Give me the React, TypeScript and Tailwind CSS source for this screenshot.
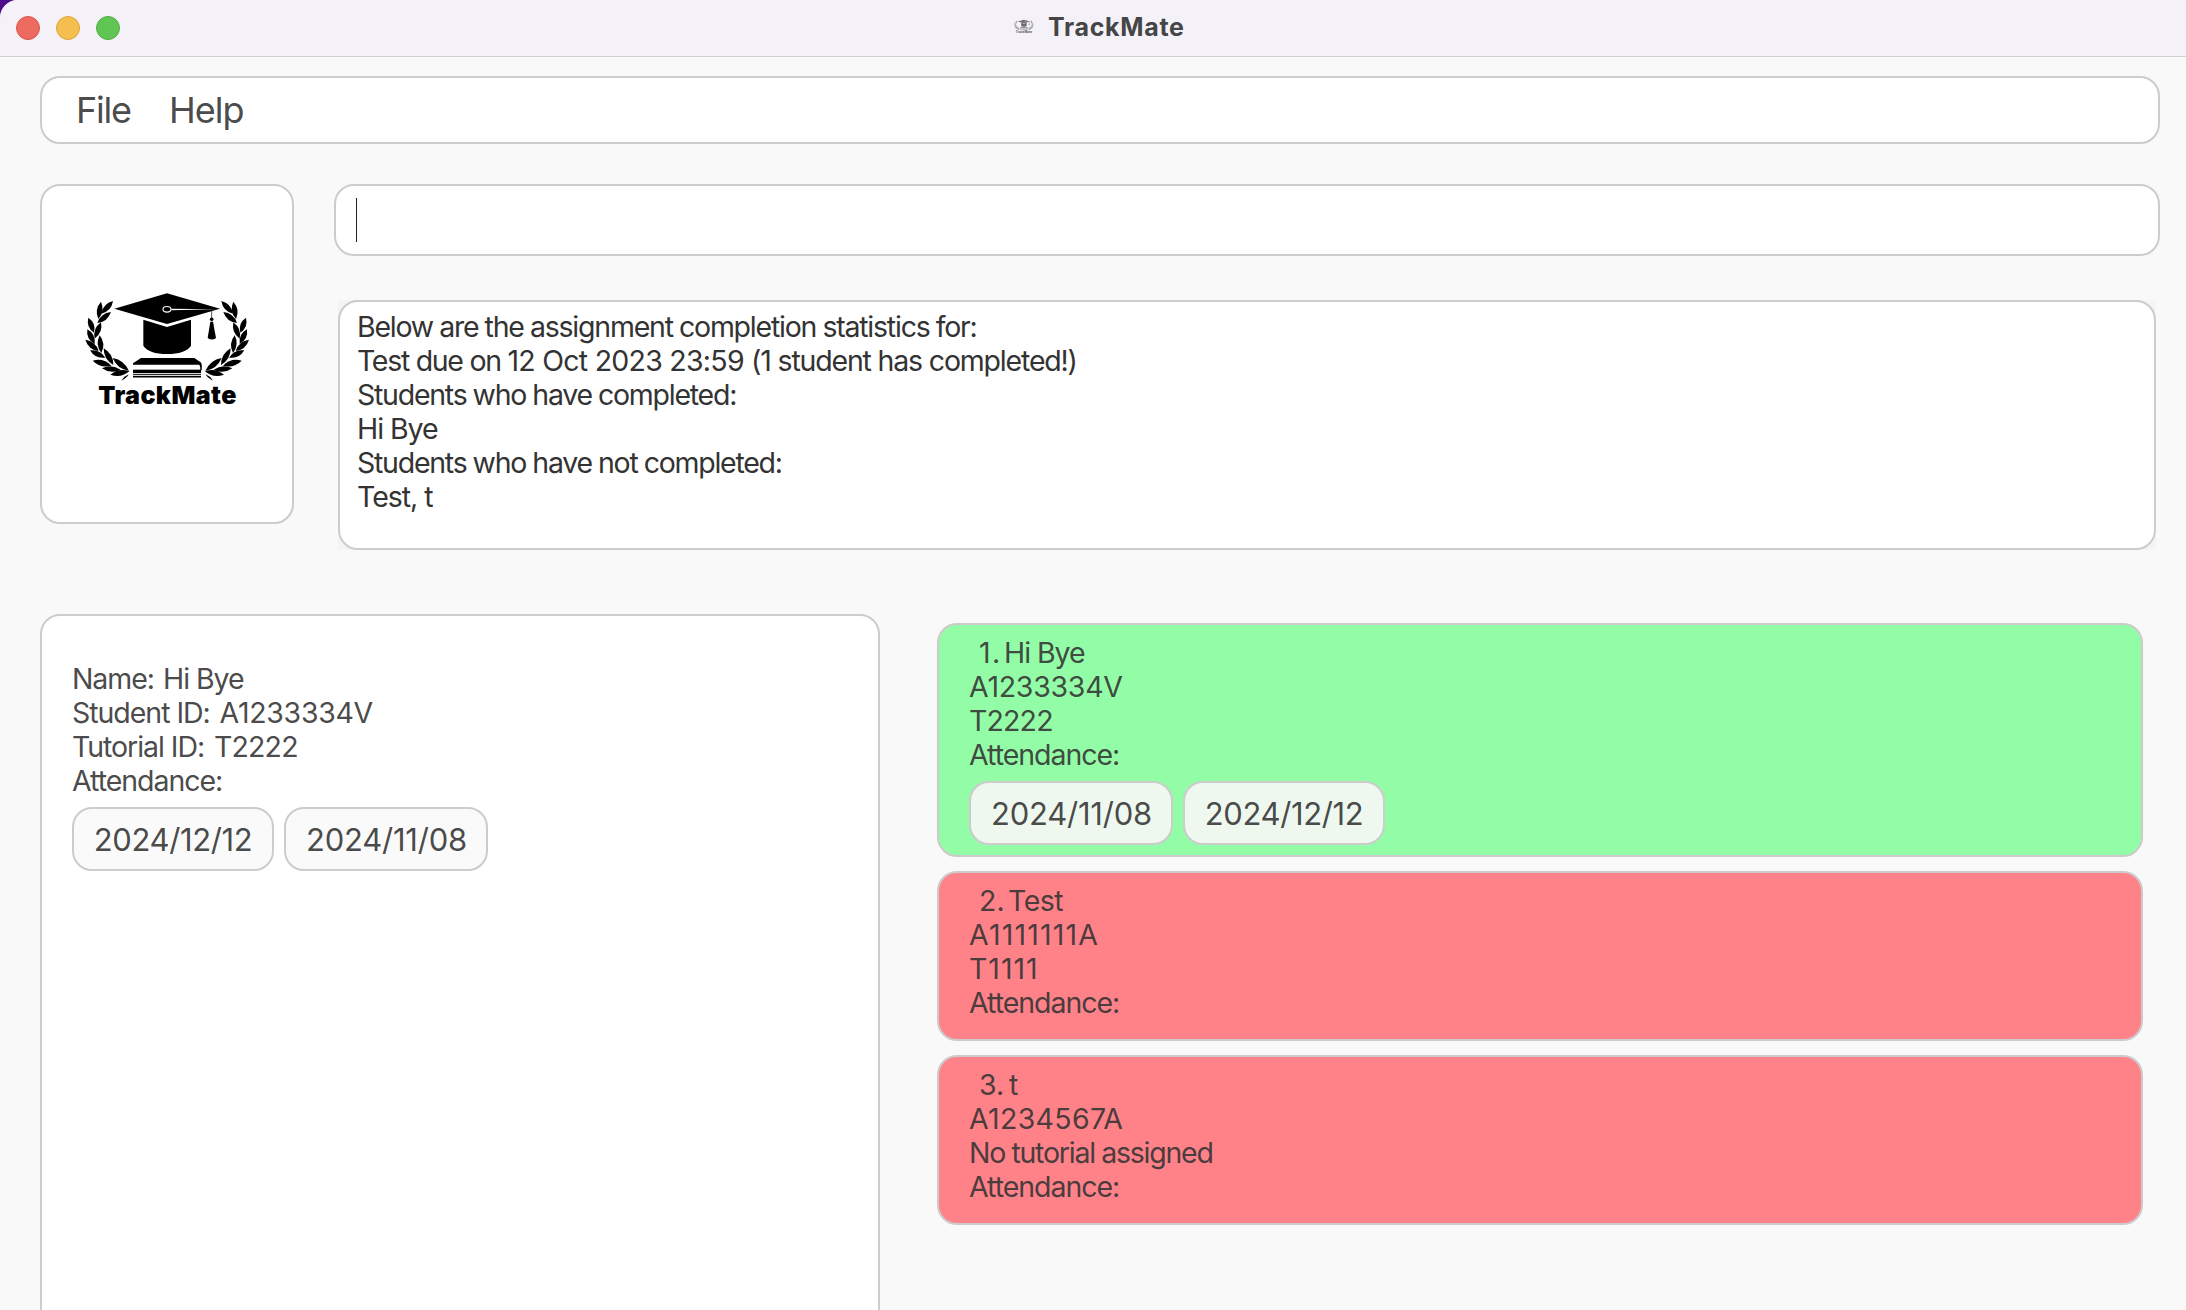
import React from "react";

type Leaf = [number, number, number, number];

const leaves: Leaf[] = [
  [249, 120, 214, 158],
  [213, 122, 205, 174],
  [243, 153, 202, 186],
  [175, 170, 192, 215],
  [213, 184, 194, 233],
  [172, 205, 194, 249],
  [209, 223, 214, 276],
  [166, 236, 206, 270],
  [180, 268, 226, 290],
  [221, 262, 250, 312],
  [188, 299, 244, 314],
  [248, 291, 297, 330],
  [216, 322, 272, 326],
  [241, 341, 298, 331],
];

const leafPath = ([x1, y1, x2, y2]: Leaf) => {
  const mx = (x1 + x2) / 2;
  const my = (y1 + y2) / 2;
  const len = Math.hypot(x2 - x1, y2 - y1);
  const nx = (-(y2 - y1) / len) * 17;
  const ny = ((x2 - x1) / len) * 17;
  return `M${x1} ${y1}Q${mx + nx} ${my + ny} ${x2} ${y2}Q${mx - nx} ${my - ny} ${x1} ${y1}Z`;
};

function Branch() {
  return (
    <g>
      {leaves.map((leaf, i) => (
        <path key={i} d={leafPath(leaf)} />
      ))}
      <path d="M274 359Q283 345 296 340Q290 352 274 359Z" />
    </g>
  );
}

function Logo({ className }: { className: string }) {
  return (
    <svg viewBox="159 90 510 360" className={`overflow-visible ${className}`} fill="currentColor">
      <Branch />
      <g transform="translate(823 0) scale(-1 1)">
        <Branch />
      </g>
      <path d="M411 97L570 143L411 189L253 143Z" />
      <path d="M340 176L411 198L483 176V254Q466 279 411 279Q357 279 340 254Z" />
      <ellipse cx="411" cy="145" rx="12" ry="8.5" fill="black" stroke="white" strokeWidth="3.5" />
      <path d="M424 143.5L560 144.5L424 147.5Z" fill="white" />
      <path d="M545 150V172" stroke="currentColor" strokeWidth="2" />
      <circle cx="545" cy="175" r="5.5" />
      <path d="M541 182H549L558 231Q546 240 533 231Z" />
      <path d="M333 291H493L512 304Q517 308 515 328L511 329Q512 316 508 311H309V307Z" />
      <rect x="309" y="326" width="204" height="10.5" />
      <rect x="309" y="339" width="204" height="2.5" />
      <rect x="309" y="344.5" width="204" height="5" />
      <text x="205" y="430" className="font-['Inter',sans-serif] text-[75px] font-black tracking-[1.2px]">
        TrackMate
      </text>
    </svg>
  );
}

function Pill({ date, className }: { date: string; className: string }) {
  return (
    <div
      className={`flex h-16 items-center justify-center rounded-[20px] border-2 border-[#cccccc] text-[31px] leading-[37px] ${className}`}
    >
      {date}
    </div>
  );
}

type Student = {
  index: string;
  indexClass: string;
  name: string;
  nameClass: string;
  id: string;
  idClass: string;
  tutorial: string;
  tutorialClass: string;
  cardClass: string;
  dates: { date: string; className: string }[];
};

const students: Student[] = [
  {
    index: "1.",
    indexClass: "w-[25px] tracking-[1.4px]",
    name: "Hi Bye",
    nameClass: "tracking-[-1.04px]",
    id: "A1233334V",
    idClass: "tracking-[-0.28px]",
    tutorial: "T2222",
    tutorialClass: "tracking-[-0.85px]",
    cardClass: "h-[234px] bg-[#93fca6]",
    dates: [
      { date: "2024/11/08", className: "w-[204px] pl-px bg-[#eef8ef] tracking-[-0.23px]" },
      { date: "2024/12/12", className: "w-[202px] bg-[#eef8ef] tracking-[-0.38px]" },
    ],
  },
  {
    index: "2.",
    indexClass: "w-[29px]",
    name: "Test",
    nameClass: "tracking-[-0.5px]",
    id: "A1111111A",
    idClass: "tracking-[1.18px]",
    tutorial: "T1111",
    tutorialClass: "tracking-[0.96px]",
    cardClass: "h-[170px] bg-[#ff8289]",
    dates: [],
  },
  {
    index: "3.",
    indexClass: "w-[30px]",
    name: "t",
    nameClass: "",
    id: "A1234567A",
    idClass: "tracking-[0.32px]",
    tutorial: "No tutorial assigned",
    tutorialClass: "tracking-[-1.23px] [word-spacing:-0.5px]",
    cardClass: "h-[170px] bg-[#ff8289]",
    dates: [],
  },
];

function StudentCard({ s }: { s: Student }) {
  return (
    <div className={`rounded-[20px] border-2 border-[#cbcbcb] pl-[30px] pt-[11px] ${s.cardClass}`}>
      <div className="flex pl-[10px]">
        <span className={s.indexClass}>{s.index}</span>
        <span className={s.nameClass}>{s.name}</span>
      </div>
      <div className={s.idClass}>{s.id}</div>
      <div className={s.tutorialClass}>{s.tutorial}</div>
      <div className="tracking-[-1.04px]">Attendance:</div>
      {s.dates.length > 0 && (
        <div className="mt-[9px] flex gap-[10px]">
          {s.dates.map((d) => (
            <Pill key={d.date} {...d} />
          ))}
        </div>
      )}
    </div>
  );
}

export default function App() {
  return (
    <div className="h-[1310px] w-[2186px] overflow-hidden bg-[#4b0d8c] font-['Inter',sans-serif] text-[28.5px] leading-[34px] text-[#333333]/90">
      <div className="flex h-full flex-col overflow-hidden rounded-tl-[18px] bg-[#f9f9f9]">
        <header className="flex h-[57px] shrink-0 items-center border-b border-[#cfced1] bg-[#f4f2f8] pl-4">
          <div className="flex w-[998px] gap-4">
            <span className="size-6 rounded-full border border-[#d8574c] bg-[#ec6a5e]" />
            <span className="size-6 rounded-full border border-[#dba63c] bg-[#f4bf4f]" />
            <span className="size-6 rounded-full border border-[#50ad41] bg-[#61c554]" />
          </div>
          <Logo className="-mt-1 h-[15px] w-5 text-[#333333]/70" />
          <span className="-mt-[3px] ml-[14px] text-[25px] font-bold tracking-[0.68px] text-[#454547]">TrackMate</span>
        </header>

        <nav className="ml-10 mt-[19px] flex h-[68px] w-[2120px] shrink-0 items-center gap-[35px] rounded-[20px] border-2 border-[#cccccc] bg-white pl-[34px] text-[36px]">
          <span className="w-[58px] tracking-[-1.23px]">File</span>
          <span className="tracking-[-0.95px]">Help</span>
        </nav>

        <section className="ml-10 mt-10 flex h-[366px] shrink-0 items-start">
          <div className="flex h-[340px] w-[254px] flex-col items-center rounded-[20px] border-2 border-[#cccccc] bg-white pl-0.5 pt-[105px]">
            <Logo className="h-[120px] w-[170px] text-black" />
          </div>
          <div className="ml-10 flex w-[1826px] flex-col">
            <div className="flex h-[72px] items-center rounded-[20px] border-2 border-[#cccccc] bg-white pl-5">
              <span className="h-11 w-px bg-[#222222]" />
            </div>
            <div className="mx-1 mt-11 h-[250px] bg-[#f4f4f4]">
              <div className="h-full rounded-[20px] border-2 border-[#cccccc] bg-white pl-[17px] pt-2 text-[#333333]">
                <div className="tracking-[-1.22px] [word-spacing:-0.6px]">
                  Below are the assignment completion statistics for:
                </div>
                <div>
                  <span className="tracking-[-1.3px]">Test due on </span>
                  <span className="tracking-[-0.74px]">12 Oct 2023 23:59 </span>
                  <span className="tracking-[-1.18px]">(1 student has completed!)</span>
                </div>
                <div className="tracking-[-1.25px] [word-spacing:-0.6px]">Students who have completed:</div>
                <div className="tracking-[-1.04px]">Hi Bye</div>
                <div className="tracking-[-1.25px] [word-spacing:-0.6px]">Students who have not completed:</div>
                <div className="tracking-[-1.02px]">Test, t</div>
              </div>
            </div>
          </div>
        </section>

        <main className="ml-10 mt-16 flex min-h-0 grow items-start">
          <section className="h-[760px] w-[840px] rounded-[20px] border-2 border-[#cccccc] bg-white pl-[30px] pt-[46px]">
            <div className="flex">
              <span className="w-[91px] tracking-[-1.1px]">Name:</span>
              <span className="tracking-[-1.04px]">Hi Bye</span>
            </div>
            <div className="flex">
              <span className="w-[147.5px] tracking-[-1.04px]">Student ID:</span>
              <span className="tracking-[-0.3px]">A1233334V</span>
            </div>
            <div className="flex">
              <span className="w-[142px] tracking-[-1.05px]">Tutorial ID:</span>
              <span className="tracking-[-0.85px]">T2222</span>
            </div>
            <div className="tracking-[-1.04px]">Attendance:</div>
            <div className="mt-[9px] flex gap-[10px]">
              <Pill date="2024/12/12" className="w-[202px] bg-[#fafafa] tracking-[-0.38px]" />
              <Pill date="2024/11/08" className="w-[204px] pl-px bg-[#fafafa] tracking-[-0.23px]" />
            </div>
          </section>
          <section className="ml-[57px] mt-[9px] flex w-[1206px] flex-col gap-[14px]">
            {students.map((s) => (
              <StudentCard key={s.id} s={s} />
            ))}
          </section>
        </main>
      </div>
    </div>
  );
}
